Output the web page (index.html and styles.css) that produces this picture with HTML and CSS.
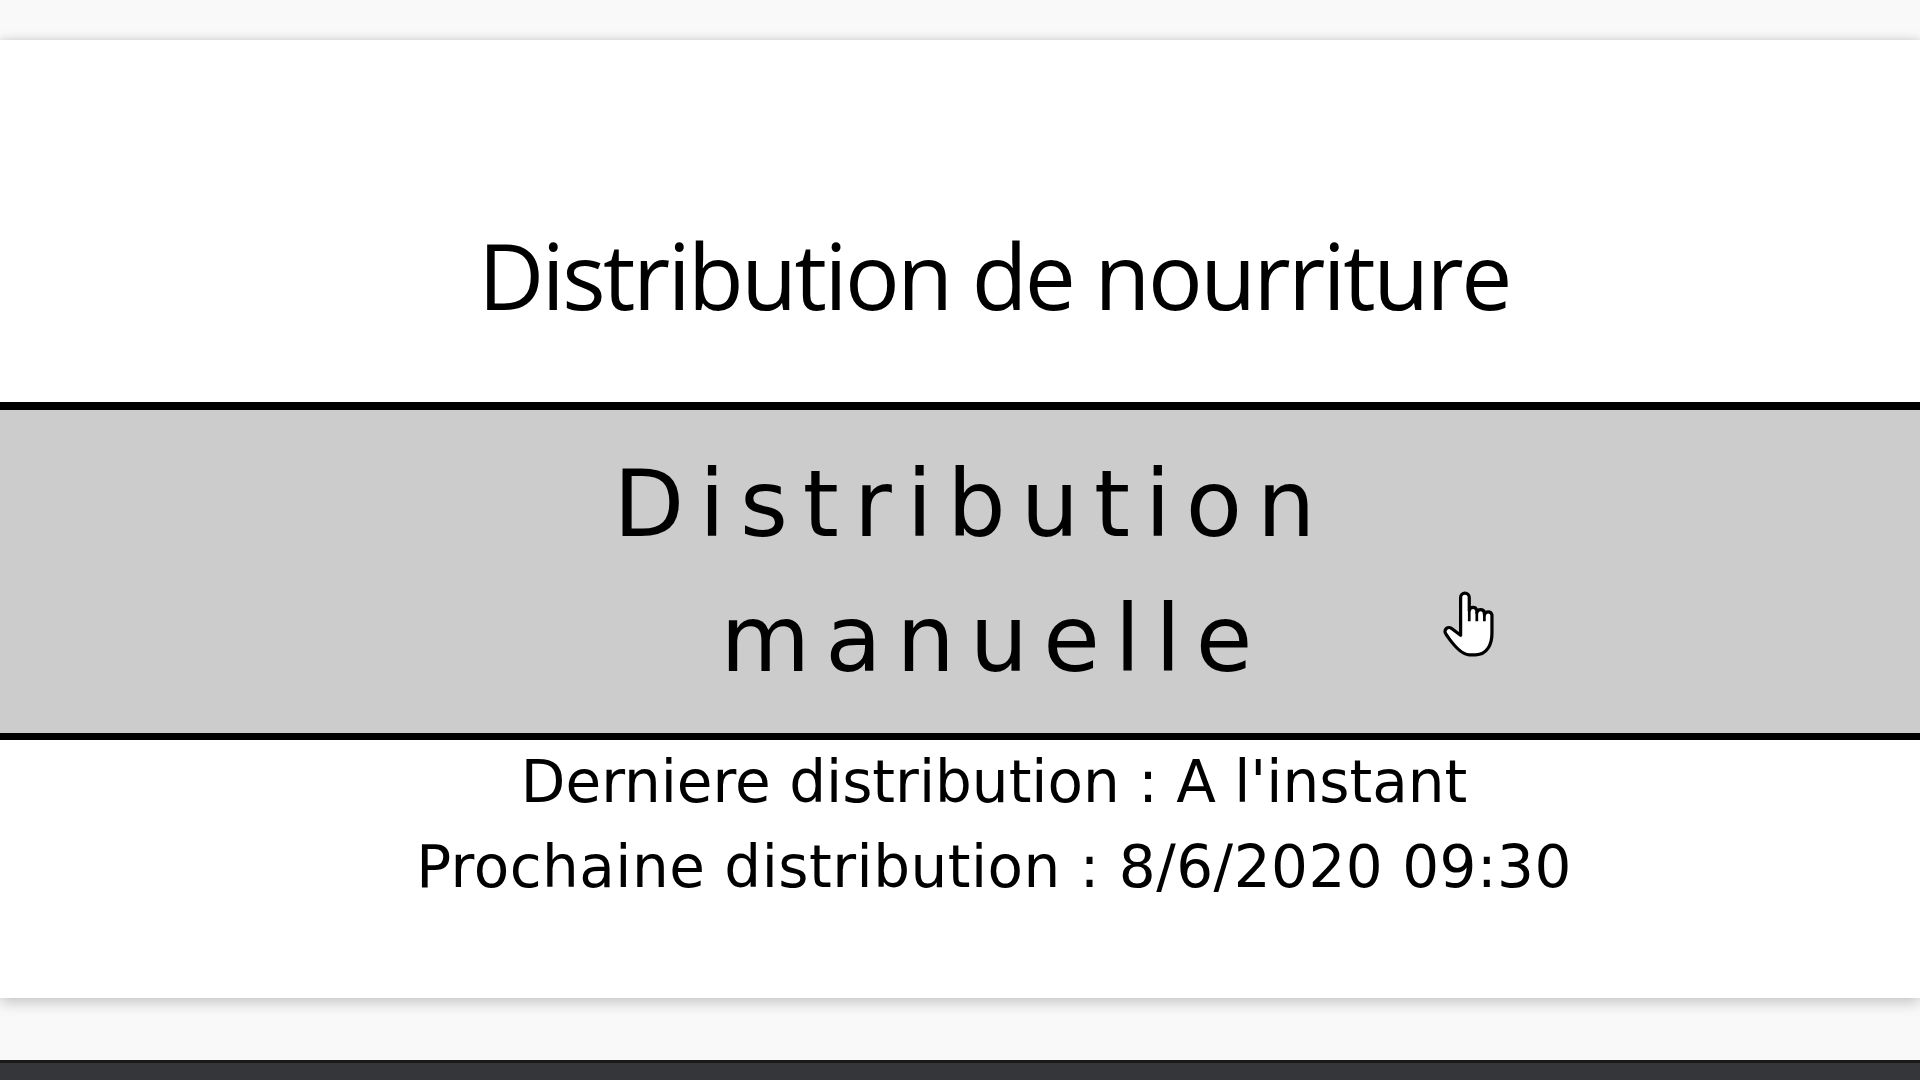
FILE: index.html
```html
<!DOCTYPE html>
<html lang="fr">
<head>
<meta charset="utf-8">
<title>Distribution de nourriture</title>
<link rel="stylesheet" href="styles.css">
</head>
<body>
<div class="page">
  <section class="card">
    <h1 class="title">Distribution de nourriture</h1>
    <div class="btn">
      <span class="btn-label">Distribution manuelle</span>
    </div>
    <div class="info">
      <p class="info-line">Derniere distribution : A l'instant</p>
      <p class="info-line info-line-next">Prochaine distribution : 8/6/2020 09:30</p>
    </div>
  </section>
</div>
<footer class="bottom-bar"></footer>
<svg class="cursor" width="59" height="67" viewBox="0 0 54 62" aria-hidden="true">
  <path d="M16,6 A4,4 0 0 1 24,6 V18 A3.6,3.6 0 0 1 31,18 V20 A3.6,3.6 0 0 1 38,20 V22 A3.6,3.6 0 0 1 45,22 V39 C45,50 40,59 30,59 H24 C18,59 12,53 6,45 L2.5,40 A3.6,3.6 0 0 1 8,35 L16,41 Z" fill="#fff" stroke="#000" stroke-width="3" stroke-linejoin="round"/>
  <path d="M24,18 V28 M31,20 V28 M38,22 V28" stroke="#000" stroke-width="2.5" fill="none"/>
</svg>
</body>
</html>
```
FILE: styles.css
```css
html, body {
  margin: 0;
  padding: 0;
}
body {
  width: 1920px;
  height: 1080px;
  overflow: hidden;
  background: #f9f9f9;
  position: relative;
  font-family: "Open Sans", "Liberation Sans", sans-serif;
  color: #000;
}
.page {
  padding-top: 40px;
  height: 1020px;
  box-sizing: border-box;
}
.card {
  background: #fff;
  height: 958px;
  box-shadow: 0 -2px 6px rgba(0,0,0,0.06), 0 4px 14px rgba(0,0,0,0.22);
  padding-left: 68px;
  box-sizing: border-box;
  display: flex;
  flex-direction: column;
  align-items: stretch;
}
.title {
  margin: 0;
  padding-top: 190px;
  height: 172px;
  box-sizing: content-box;
  font-weight: 400;
  font-size: 91px;
  line-height: 90px;
  text-align: center;
  letter-spacing: -2.5px;
}
.btn {
  margin-left: -68px;
  background: #cccccc;
  border-top: 8px solid #000;
  border-bottom: 7px solid #000;
  height: 323px;
  box-sizing: content-box;
  display: flex;
  justify-content: center;
  align-items: center;
  padding-left: 68px;
}
.btn-label {
  display: block;
  width: 900px;
  text-align: center;
  white-space: break-spaces;
  font-family: "DejaVu Sans", Verdana, sans-serif;
  font-size: 92px;
  line-height: 135px;
  letter-spacing: 15px;
}
.info {
  padding-top: 0;
  text-align: center;
  font-family: "DejaVu Sans", Verdana, sans-serif;
  font-size: 58px;
  line-height: 85px;
}
.info-line {
  margin: 0;
}
.info-line-next {
  letter-spacing: 0.5px;
}
.bottom-bar {
  position: absolute;
  left: 0;
  right: 0;
  top: 1060px;
  height: 20px;
  background: #35363a;
  border-top: 3px solid #1a1a1a;
}
.cursor {
  position: absolute;
  left: 1443px;
  top: 591px;
}
```
